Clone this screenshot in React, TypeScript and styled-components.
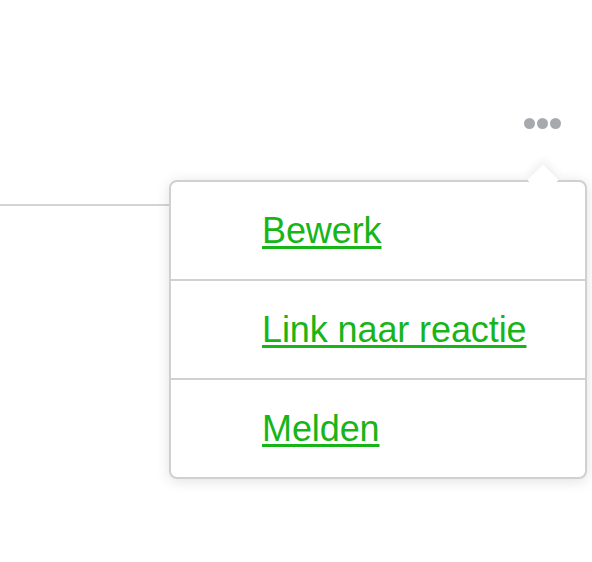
import React from "react";
import styled, { createGlobalStyle } from "styled-components";

const GlobalStyle = createGlobalStyle`
  html, body { margin: 0; padding: 0; background: #ffffff; }
  body { font-family: "Liberation Sans", Arial, sans-serif; }
`;

const Page = styled.div`
  position: relative;
  width: 592px;
  height: 562px;
  overflow: hidden;
  background: #ffffff;
`;

const Toolbar = styled.div`
  display: flex;
  justify-content: flex-end;
  padding: 118px 31px 0 0;
`;

const DotsButton = styled.button`
  display: flex;
  gap: 2px;
  padding: 0;
  border: 0;
  background: transparent;
  cursor: pointer;
`;

const Dot = styled.span`
  width: 11px;
  height: 11px;
  border-radius: 50%;
  background: #a6aaaf;
`;

const Divider = styled.div`
  margin-top: 75px;
  height: 2px;
  width: 200px;
  background: #d4d4d4;
`;

const Menu = styled.ul`
  position: absolute;
  left: 169px;
  top: 180px;
  width: 414px;
  margin: 0;
  padding: 0;
  list-style: none;
  background: #ffffff;
  border: 2px solid #d0d0d0;
  border-radius: 8px;
  box-shadow: 0 2px 14px rgba(0, 0, 0, 0.12);
`;

const Arrow = styled.span`
  position: absolute;
  right: 31px;
  top: -13px;
  width: 22px;
  height: 22px;
  background: #ffffff;
  transform: rotate(45deg);
  transform-origin: center;
  box-shadow: -4px -4px 8px rgba(0, 0, 0, 0.06);
`;

const ArrowCover = styled.span`
  position: absolute;
  right: 21px;
  top: 0;
  width: 42px;
  height: 14px;
  background: #ffffff;
`;

const Item = styled.li<{ $last?: boolean }>`
  position: relative;
  display: flex;
  align-items: center;
  height: 97px;
  padding-left: 91px;
  border-bottom: ${(p) => (p.$last ? "0" : "2px solid #d0d0d0")};
`;

const ItemLink = styled.a`
  font-family: "Liberation Sans", Arial, sans-serif;
  font-size: 36px;
  color: #17b517;
  text-decoration: underline;
  text-decoration-thickness: 3px;
  text-underline-offset: 3px;
  letter-spacing: -0.1px;
`;

export default function App() {
  const items = ["Bewerk", "Link naar reactie", "Melden"];
  return (
    <Page>
      <GlobalStyle />
      <Toolbar>
        <DotsButton aria-label="Meer opties">
          <Dot />
          <Dot />
          <Dot />
        </DotsButton>
      </Toolbar>
      <Divider />
      <Menu>
        <Arrow />
        <ArrowCover />
        {items.map((label, i) => (
          <Item key={label} $last={i === items.length - 1}>
            <ItemLink href="#">{label}</ItemLink>
          </Item>
        ))}
      </Menu>
    </Page>
  );
}
